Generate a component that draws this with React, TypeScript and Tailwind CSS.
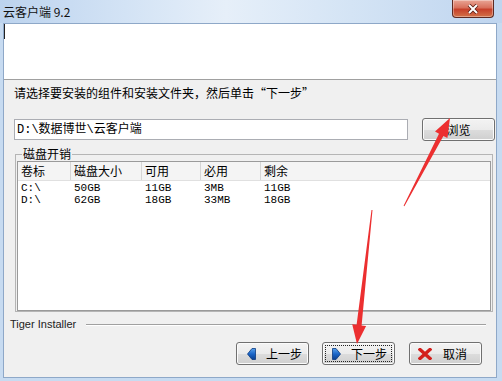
import React from 'react';

type Pt = [number, number];

// tapered annotation arrow: thin at the tail, head at the tip
const arrowPoints = (tail: Pt, tip: Pt, tailW: number, neckW: number, headW: number, headL: number) => {
  const [tx, ty] = tail;
  const [hx, hy] = tip;
  const len = Math.hypot(hx - tx, hy - ty);
  const ux = (hx - tx) / len;
  const uy = (hy - ty) / len;
  const px = -uy;
  const py = ux;
  const nx = hx - ux * headL;
  const ny = hy - uy * headL;
  const pts: Pt[] = [
    [tx + (px * tailW) / 2, ty + (py * tailW) / 2],
    [nx + (px * neckW) / 2, ny + (py * neckW) / 2],
    [nx + (px * headW) / 2, ny + (py * headW) / 2],
    [hx, hy],
    [nx - (px * headW) / 2, ny - (py * headW) / 2],
    [nx - (px * neckW) / 2, ny - (py * neckW) / 2],
    [tx - (px * tailW) / 2, ty - (py * tailW) / 2],
  ];
  return pts.map((p) => p.map((v) => v.toFixed(1)).join(',')).join(' ');
};

const BlueArrow = ({ dir }: { dir: 'left' | 'right' }) => (
  <svg width="9" height="12" viewBox="0 0 9 12" className={dir === 'right' ? 'scale-x-[-1]' : ''}>
    <defs>
      <linearGradient id={`ba-${dir}`} x1="0" y1="0" x2="0" y2="1">
        <stop offset="0" stopColor="#5aa2ec" />
        <stop offset="0.5" stopColor="#1a65c8" />
        <stop offset="1" stopColor="#0b3f8f" />
      </linearGradient>
    </defs>
    <polygon points="0.5,6 5,0.5 8.5,0.5 8.5,11.5 5,11.5" fill={`url(#ba-${dir})`} stroke="#0b3a80" strokeWidth="0.8" />
  </svg>
);

const RedX = () => (
  <svg width="14" height="12" viewBox="0 0 14 12">
    <path d="M2 1.5 L12 10.5 M12 1.5 L2 10.5" stroke="#d3201c" strokeWidth="3.4" strokeLinecap="square" />
  </svg>
);

const btn =
  'h-[23px] w-[73px] rounded-[3px] border border-[#707070] bg-[linear-gradient(#f3f3f3_0%,#ebebeb_50%,#dddddd_50%,#cfcfcf_100%)] shadow-[inset_0_0_0_1px_#fbfbfb] flex items-center text-[12px] leading-[14px]';

export default function App() {
  const cols = [53, 71, 59, 60];
  const header = ['卷标', '磁盘大小', '可用', '必用', '剩余'];
  const rows = [
    ['C:\\', '50GB', '11GB', '3MB', '11GB'],
    ['D:\\', '62GB', '18GB', '33MB', '18GB'],
  ];

  return (
    <div className="relative w-[502px] h-[381px] overflow-hidden bg-[#c7dbf1] flex flex-col font-['Noto_Sans_CJK_SC',sans-serif] text-black">
      {/* title bar */}
      <div className="h-[23px] flex items-start bg-[linear-gradient(90deg,#bcd3ee_0%,#d3e3f5_25%,#e6eff9_45%,#d4e4f5_70%,#bfd5ef_100%)]">
        <span className="mt-[4px] ml-[3px] text-[12px] leading-[15px] text-[#111]">云客户端 9.2</span>
        <div className="ml-auto mr-[8px] w-[42px] h-[18px] rounded-b-[4px] border border-t-0 border-[#5e2a22] bg-[linear-gradient(#e9a595_0%,#d8705c_45%,#c7402a_55%,#d27248_100%)] shadow-[inset_0_0_0_1px_rgba(255,255,255,0.35)] flex items-center justify-center">
          <svg width="12" height="10" viewBox="0 0 12 10">
            <path d="M2 1 L10 9 M10 1 L2 9" stroke="#5a1d14" strokeWidth="3.6" />
            <path d="M2 1 L10 9 M10 1 L2 9" stroke="#ffffff" strokeWidth="2" />
          </svg>
        </div>
      </div>

      {/* dialog body */}
      <div className="flex-1 ml-[3px] mr-[5px] mb-[3px] border border-[#8ea8c8] flex flex-col bg-[#f0f0f0]">
        <div className="h-[56px] bg-white border-b border-[#a0a0a0]">
          <div className="w-[1px] h-[15px] bg-[#222]" />
        </div>

        <div className="mt-[5px] pl-[10px] text-[12px] leading-[16px]">请选择要安装的组件和安装文件夹，然后单击“下一步”</div>

        <div className="mt-[17px] pl-[10px] h-[23px] flex items-center">
          <div className="w-[394px] h-[21px] border border-[#abadb3] bg-white pl-[2px] flex items-center text-[12px] leading-[14px] font-['Liberation_Mono','Noto_Sans_CJK_SC',monospace]">
            D:\数据博世\云客户端
          </div>
          <div className={`${btn} ml-[14px] w-[58px] justify-center`}>浏览</div>
        </div>

        <fieldset className="mt-[6px] ml-[11px] w-[478px] border border-[#b5b5b5] p-0">
          <legend className="ml-[6px] px-[1px] text-[12px] leading-[14px]">磁盘开销</legend>
          <div className="mx-[1px] border border-[#9a9a9a] bg-white">
            <div className="h-[18px] flex bg-[#f4f4f4] text-[12px] leading-[18px]">
              {header.map((h, i) => (
                <div
                  key={h}
                  className={`pl-[3px] ${i < 4 ? 'border-r border-[#d6d6d6]' : 'flex-1'}`}
                  style={i < 4 ? { width: cols[i] } : undefined}
                >
                  {h}
                </div>
              ))}
            </div>
            <div className="h-[130px] border-t border-[#e0e0e0] pt-[1px] font-['Liberation_Mono',monospace] text-[11px] leading-[12px]">
              {rows.map((r) => (
                <div key={r[0]} className="flex">
                  {r.map((c, i) => (
                    <div key={i} className={`pl-[3px] ${i < 4 ? '' : 'flex-1'}`} style={i < 4 ? { width: cols[i] } : undefined}>
                      {c}
                    </div>
                  ))}
                </div>
              ))}
            </div>
          </div>
        </fieldset>

        <div className="mt-[6px] pl-[6px] pr-[10px] h-[13px] flex items-center">
          <span className="text-[11px] leading-[13px] text-[#222] font-['Liberation_Sans',sans-serif]">Tiger Installer</span>
          <div className="flex-1 ml-[10px] border-t border-[#a0a0a0] border-b border-b-white" />
        </div>

        <div className="mt-[11px] pr-[14px] flex justify-end gap-[13px]">
          <div className={`${btn} pl-[10px] gap-[10px]`}>
            <BlueArrow dir="left" />
            <span>上一步</span>
          </div>
          <div className={`${btn} pl-[9px] gap-[10px] border-[#3c7fb1] bg-[linear-gradient(#eef5fb_0%,#e3edf6_50%,#d3e1ee_50%,#c9d9e9_100%)] outline-1 outline-dotted outline-[#222] outline-offset-[-4px]`}>
            <BlueArrow dir="right" />
            <span>下一步</span>
          </div>
          <div className={`${btn} ml-[1px] pl-[8px] gap-[11px]`}>
            <RedX />
            <span>取消</span>
          </div>
        </div>
      </div>

      {/* red annotation arrows */}
      <svg className="absolute inset-0 pointer-events-none" width="502" height="381">
        <polygon points={arrowPoints([404, 206], [450, 118], 1, 5, 14, 19)} fill="#ec2f30" />
        <polygon points={arrowPoints([372, 210], [357, 344], 1, 5, 14, 19)} fill="#ec2f30" />
      </svg>
    </div>
  );
}
